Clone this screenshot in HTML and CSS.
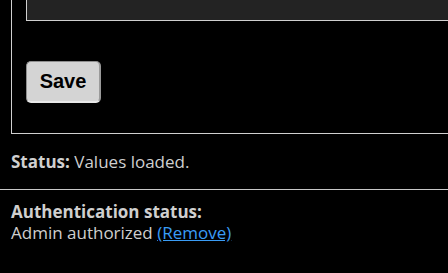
FILE: index.html
```html
<!DOCTYPE html>
<html>
<head>
<meta charset="utf-8">
<link rel="stylesheet" href="styles.css">
</head>
<body>
<main class="page">
  <fieldset class="settings">
    <textarea class="values"></textarea>
    <button class="save" type="button">Save</button>
  </fieldset>
  <p class="status"><b>Status:</b> Values loaded.</p>
  <hr class="divider">
  <div class="auth">
    <b>Authentication status:</b><br>
    Admin authorized <a href="#" class="remove">(Remove)</a>
  </div>
</main>
</body>
</html>
```
FILE: styles.css
```css
html, body {
  margin: 0;
  padding: 0;
  background: #000;
  overflow: hidden;
}
body {
  font-family: "Open Sans", "Noto Sans", sans-serif;
  font-size: 17px;
  color: #cfcfcf;
}
.page {
  display: flex;
  flex-direction: column;
}
.settings {
  margin: 0 0 0 11px;
  padding: 0 0 30px 14px;
  border: none;
  border-left: 1px solid #d0d0d0;
  border-bottom: 1px solid #d0d0d0;
  display: flex;
  flex-direction: column;
  align-items: flex-start;
  min-width: 0;
}
.values {
  display: block;
  align-self: stretch;
  box-sizing: border-box;
  height: 21px;
  margin: 0;
  padding: 0;
  resize: none;
  background: #232323;
  border: none;
  border-left: 1px solid #d0d0d0;
  border-bottom: 1px solid #d0d0d0;
}
.save {
  margin-top: 40px;
  box-sizing: border-box;
  width: 75px;
  height: 42px;
  padding: 0;
  font-family: "Liberation Sans", Arial, sans-serif;
  font-weight: bold;
  font-size: 20px;
  color: #000;
  background: #d4d4d4;
  border: 1px solid #8e8e8e;
  border-bottom: 2px solid #e8e8e8;
  border-right: 2px solid #9a9a9a;
  border-radius: 5px;
}
.status {
  margin: 17px 11px 0;
  line-height: 21px;
}
.status b, .auth b {
  font-weight: bold;
}
.divider {
  margin: 17px 0 0;
  border: none;
  border-top: 1px solid #c8c8c8;
  height: 0;
}
.auth {
  margin: 11px 11px 0;
  line-height: 21px;
}
.remove {
  color: #3a9cf5;
  text-decoration: underline;
}
```
